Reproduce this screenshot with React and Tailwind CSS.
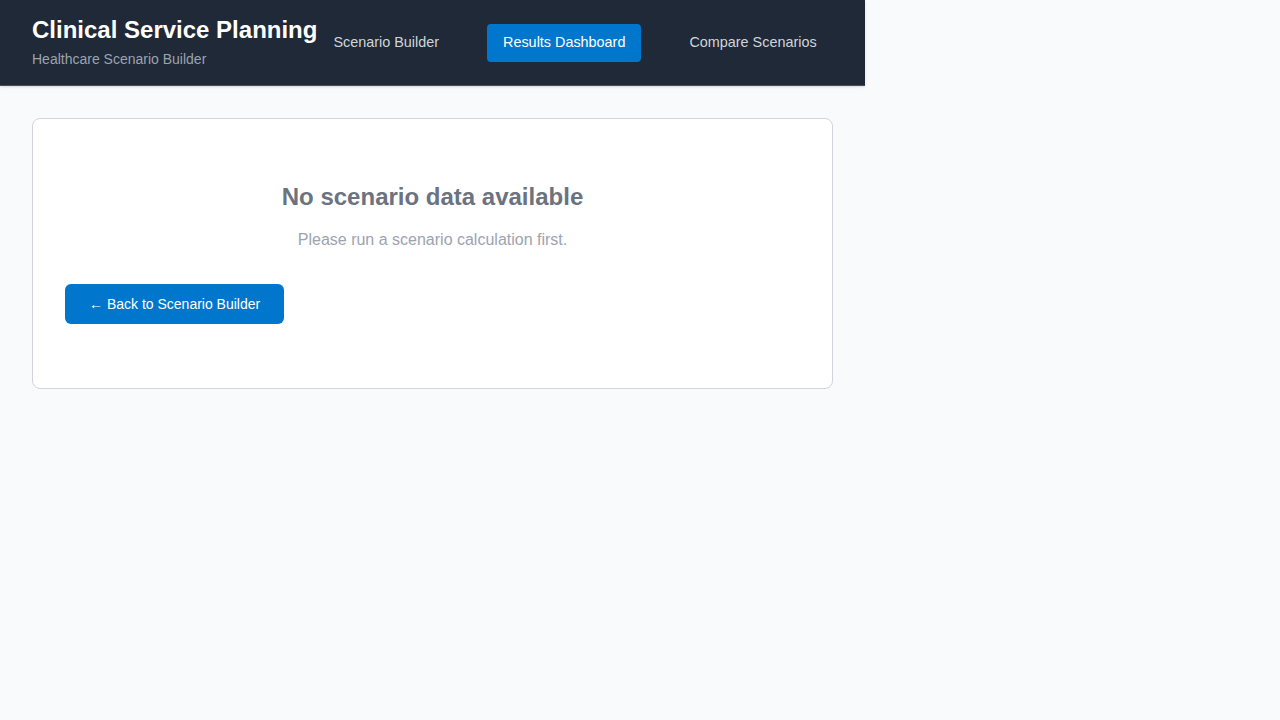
export default function App() {
  return (
    <div className="min-h-screen bg-[#f9fafb]" style={{ fontFamily: '"Liberation Sans", Arial, sans-serif' }}>
      <div className="w-[865px]">
        <header className="flex items-center bg-[#1f2937] px-8 pt-4 pb-4 border-b border-[#e5e7eb]/20 shadow-sm whitespace-nowrap">
          <div className="shrink-0">
            <h1 className="text-[24px] leading-[28px] font-bold text-white">Clinical Service Planning</h1>
            <p className="mt-[5px] text-[14px] leading-[20px] text-[#9ca3af]">Healthcare Scenario Builder</p>
          </div>
          <nav className="flex items-center gap-8 shrink-0">
            <button className="px-4 pt-[7px] pb-[9px] text-[14.4px] leading-[22px] text-[#d1d5db] rounded">Scenario Builder</button>
            <button className="px-4 pt-[7px] pb-[9px] text-[14.4px] leading-[22px] text-white bg-[#0077cc] rounded">Results Dashboard</button>
            <button className="px-4 pt-[7px] pb-[9px] text-[14.4px] leading-[22px] text-[#d1d5db] rounded">Compare Scenarios</button>
          </nav>
        </header>
        <main className="p-8">
          <div className="bg-white border border-[#d1d5db] rounded-lg p-8 pb-16">
            <div className="pt-8 pb-8 text-center">
              <h2 className="text-[24px] leading-[28px] font-bold text-[#6b7280]">No scenario data available</h2>
              <p className="mt-[17px] text-[16px] leading-[24px] text-[#9ca3af]">Please run a scenario calculation first.</p>
            </div>
            <button className="h-10 px-6 rounded-md bg-[#0077cc] text-white text-[14px]">← Back to Scenario Builder</button>
          </div>
        </main>
      </div>
    </div>
  );
}
